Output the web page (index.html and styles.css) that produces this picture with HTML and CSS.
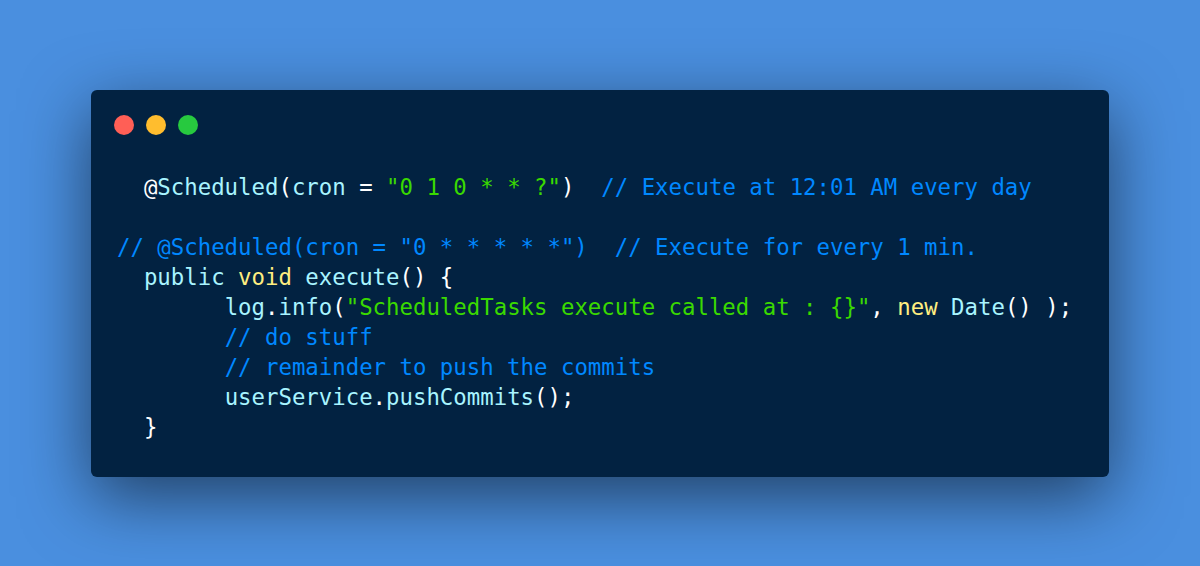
FILE: index.html
```html
<!DOCTYPE html>
<html>
<head>
<meta charset="utf-8">
<link rel="stylesheet" href="styles.css">
</head>
<body>
<div class="stage">
  <div class="window">
    <div class="controls">
      <span class="dot red"></span>
      <span class="dot yellow"></span>
      <span class="dot green"></span>
    </div>
<pre class="code"><span class="p">  @</span><span class="v">Scheduled</span><span class="p">(</span><span class="v">cron</span><span class="p"> = </span><span class="s">"0 1 0 * * ?"</span><span class="p">)</span>  <span class="c">// Execute at 12:01 AM every day</span>

<span class="c">// @Scheduled(cron = "0 * * * * *")  // Execute for every 1 min.</span>
  <span class="v">public</span> <span class="k">void</span> <span class="v">execute</span><span class="p">() {</span>
        <span class="v">log</span><span class="p">.</span><span class="v">info</span><span class="p">(</span><span class="s">"ScheduledTasks execute called at : {}"</span><span class="p">, </span><span class="k">new</span> <span class="v">Date</span><span class="p">() );</span>
        <span class="c">// do stuff</span>
        <span class="c">// remainder to push the commits</span>
        <span class="v">userService</span><span class="p">.</span><span class="v">pushCommits</span><span class="p">();</span>
  <span class="p">}</span></pre>
  </div>
</div>
</body>
</html>
```

FILE: styles.css
```css
html, body {
  margin: 0;
  padding: 0;
}
body {
  background: #4a8fdf;
  overflow: hidden;
}
.stage {
  height: 566px;
  display: flex;
  align-items: center;
  justify-content: center;
}
.window {
  width: 1018px;
  height: 387px;
  box-sizing: border-box;
  background: #022241;
  border-radius: 6px;
  box-shadow: 0 20px 68px rgba(0, 0, 0, 0.55);
  padding: 25px 0 0 0;
}
.controls {
  display: flex;
  gap: 12px;
  padding-left: 23px;
  height: 20px;
}
.dot {
  width: 20px;
  height: 20px;
  border-radius: 50%;
  display: block;
}
.red { background: #ff5f56; }
.yellow { background: #ffbd2e; }
.green { background: #27c93f; }
.code {
  margin: 37px 0 0 0;
  padding: 0 0 0 26px;
  font-family: "DejaVu Sans Mono", monospace;
  font-size: 22.35px;
  line-height: 30px;
  color: #ffffff;
  white-space: pre;
}
.v { color: #a8f4ff; }
.p { color: #ffffff; }
.s { color: #3ad900; }
.c { color: #0088ff; }
.k { color: #ffee80; }
```
